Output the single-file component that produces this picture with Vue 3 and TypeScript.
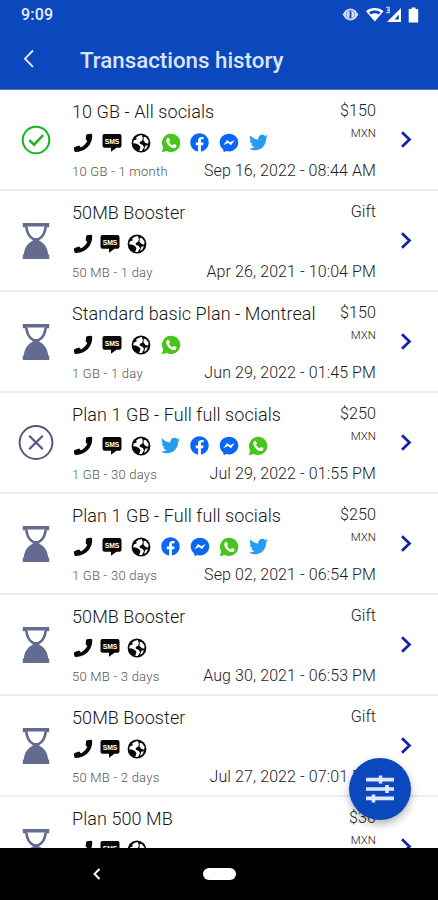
<script setup lang="ts">
type IconName = 'phone' | 'sms' | 'globe' | 'whatsapp' | 'facebook' | 'messenger' | 'twitter'
type Status = 'done' | 'pending' | 'cancelled'

interface Transaction {
  status: Status
  title: string
  price: string
  currency?: string
  icons: IconName[]
  detail?: string
  date?: string
}

const base: IconName[] = ['phone', 'sms', 'globe']

const transactions: Transaction[] = [
  { status: 'done', title: '10 GB - All socials', price: '$150', currency: 'MXN', icons: [...base, 'whatsapp', 'facebook', 'messenger', 'twitter'], detail: '10 GB - 1 month', date: 'Sep 16, 2022 - 08:44 AM' },
  { status: 'pending', title: '50MB Booster', price: 'Gift', icons: base, detail: '50 MB - 1 day', date: 'Apr 26, 2021 - 10:04 PM' },
  { status: 'pending', title: 'Standard basic Plan - Montreal', price: '$150', currency: 'MXN', icons: [...base, 'whatsapp'], detail: '1 GB - 1 day', date: 'Jun 29, 2022 - 01:45 PM' },
  { status: 'cancelled', title: 'Plan 1 GB - Full full socials', price: '$250', currency: 'MXN', icons: [...base, 'twitter', 'facebook', 'messenger', 'whatsapp'], detail: '1 GB - 30 days', date: 'Jul 29, 2022 - 01:55 PM' },
  { status: 'pending', title: 'Plan 1 GB - Full full socials', price: '$250', currency: 'MXN', icons: [...base, 'facebook', 'messenger', 'whatsapp', 'twitter'], detail: '1 GB - 30 days', date: 'Sep 02, 2021 - 06:54 PM' },
  { status: 'pending', title: '50MB Booster', price: 'Gift', icons: base, detail: '50 MB - 3 days', date: 'Aug 30, 2021 - 06:53 PM' },
  { status: 'pending', title: '50MB Booster', price: 'Gift', icons: base, detail: '50 MB - 2 days', date: 'Jul 27, 2022 - 07:01 PM' },
  { status: 'pending', title: 'Plan 500 MB', price: '$30', currency: 'MXN', icons: base },
]
</script>

<template>
  <div class="screen">
    <header class="header">
      <div class="statusbar">
        <span class="clock">9:09</span>
        <svg class="system" viewBox="0 0 80 20" width="80" height="20">
          <path d="M.5 9.500L3.500 5.500Q8.500 1.500 13.500 5.500l3 4-3 4Q8.500 17.500 3.500 13.500z" fill="#d3dcf8" />
          <circle cx="8.500" cy="9.500" r="4.200" fill="none" stroke="#6f90dc" stroke-width=".8" />
          <path d="M8.500 6v7" stroke="#0c48bd" stroke-width="1.800" />
          <path d="M24 6.200C28.500 2 37 2 41.500 6.200L32.800 16.500z" fill="#fff" />
          <path d="M27 7.200c3.200-2.400 8.400-2.400 11.600 0l-1.800 2.200c-2.300-1.700-5.700-1.700-8 0z" fill="#0c48bd" />
          <path d="M45 17L59 3v14z" fill="#fff" />
          <path d="M52.500 14.500L56.800 9.500v5z" fill="#0c48bd" />
          <path d="M44.200 2.500h3v5h-3M45 5h2" fill="none" stroke="#b9c9f0" stroke-width="1.400" />
          <path d="M69.500 2.500h4V4h2.700v13.500h-9.500V4h2.800z" fill="#fff" />
        </svg>
      </div>
      <div class="toolbar">
        <svg class="back" viewBox="0 0 12 20" width="12" height="20">
          <path d="M10 1.500L2 9.700l8 8.200" fill="none" stroke="#e4eafb" stroke-width="1.900" />
        </svg>
        <h1>Transactions history</h1>
      </div>
    </header>

    <main class="list">
      <article v-for="(t, i) in transactions" :key="i" class="row">
        <div class="status">
          <svg v-if="t.status === 'done'" viewBox="0 0 30 30" width="30" height="30" fill="none" stroke="#14b71c">
            <circle cx="15" cy="15" r="13.300" stroke-width="2" />
            <path d="M8.300 15.200l4.800 4.500 9-9.500" stroke-width="2.400" />
          </svg>
          <svg v-else-if="t.status === 'cancelled'" viewBox="0 0 36 36" width="36" height="36" fill="none" stroke="#545a82">
            <circle cx="18" cy="17.500" r="16.400" stroke-width="2" />
            <path d="M11.200 10.700l13.600 13.600M24.800 10.700L11.200 24.300" stroke-width="2.200" />
          </svg>
          <svg v-else viewBox="0 0 28 36" width="28" height="36">
            <path d="M.8 0h26.400v4.200H.8zM.8 31.500h26.400V36H.8z" fill="#646b90" />
            <path d="M4.300 3.500C4.800 10 7.500 14.200 11.800 16.400h4.400C20.500 14.200 23.200 10 23.700 3.500" fill="#fff" stroke="#646b90" stroke-width="2.700" />
            <path d="M10.800 15.700h6.400v2C22.500 20 26 25 26.200 32.500H1.800C2 25 5.500 20 10.800 17.700z" fill="#646b90" />
          </svg>
        </div>

        <div class="body">
          <div class="top">
            <h2>{{ t.title }}</h2>
            <span class="price">{{ t.price }}</span>
          </div>
          <div class="middle">
            <div class="icons" :class="{ tight: t.icons.length === 3 }">
              <span v-for="icon in t.icons" :key="icon" class="icon">
                <svg v-if="icon === 'phone'" viewBox="0 0 20 20" width="20" height="20">
                  <path fill="#080808" d="M14.200 1.200l3.300-.4q1.500-.1 1.700 1.300C19.800 11.500 12 19.300 2.800 19q-1.200 0-1.500-1.300L.9 15.600q-.2-1 .8-1.500l3.600-1.400q.9-.3 1.500.4l1.100 1.300C10.500 13 12.900 10.800 14.300 8l-1.100-1q-.6-.6-.5-1.500l.4-3.200q.1-.9 1.100-1.100z" />
                </svg>
                <svg v-else-if="icon === 'sms'" viewBox="0 0 20 20" width="20" height="20">
                  <path fill="#080808" d="M2.500 1h15q2 0 2 2v9.800q0 2-2 2h-3l-5.500 4v-4H2.500q-2 0-2-2V3q0-2 2-2z" />
                  <text x="10" y="10.500" text-anchor="middle" class="smstext">SMS</text>
                </svg>
                <svg v-else-if="icon === 'globe'" viewBox="0 0 20 20" width="20" height="20">
                  <circle cx="10" cy="10" r="9.400" fill="#080808" />
                  <path fill="#fff" d="M10.800 2l-3 .8-2.700 1.700.7 1.700-2.900 1.200-.9 2.800 2.900.2 3 1.700 1.600 2-1.300 3.800 2.600.2 2.200-3.900-1.200-2.300-2.900-1.100-.2-1.700 2.400-1.400.8-2.500zM12.800 3.700l2.200.6 2.600 3.500-.5 2.900-2.800-.9-1.800-2.400zM14.400 12.800l2.600-.6-1.800 3.600-2.200 1z" />
                </svg>
                <svg v-else-if="icon === 'whatsapp'" viewBox="0 0 20 20" width="20" height="20">
                  <path fill="#48c51d" d="M10.200.8a9.100 9.100 0 1 1-4.400 17.100L.8 19.300l1.400-4.900A9.100 9.100 0 0 1 10.200.8z" />
                  <path fill="#fff" d="M6.200 5.200c.8-.8 1.500-.6 1.900.2l.8 1.800c.2.500-.8 1.300-.8 1.700.8 1.600 2 2.600 3.500 3.300.5.100 1.100-1.200 1.600-1.100l2 1c.5.300.3 1.700-.4 2.300-1.700 1.600-4.700.3-6.800-1.700C5.900 10.600 4.200 7.400 6.200 5.200z" />
                </svg>
                <svg v-else-if="icon === 'facebook'" viewBox="0 0 512 512" width="19" height="19">
                  <path fill="#0868f5" d="M504 256C504 119 393 8 256 8S8 119 8 256c0 123.780 90.690 226.380 209.250 245V327.690h-63V256h63v-54.640c0-62.150 37-96.480 93.670-96.480 27.140 0 55.520 4.840 55.520 4.840v61h-31.280c-30.800 0-40.410 19.120-40.410 38.730V256h68.780l-11 71.690h-57.780V501C413.310 482.380 504 379.780 504 256z" />
                </svg>
                <svg v-else-if="icon === 'messenger'" viewBox="0 0 20 20" width="20" height="20">
                  <path fill="#0868f5" d="M10 .8c5.200 0 9.300 3.800 9.300 8.800s-4.100 8.800-9.300 8.800c-1 0-1.800-.1-2.700-.4l-2.600 1.300-.5-2.700C2 14.900.7 12.600.7 9.600.7 4.600 4.800.8 10 .8z" />
                  <path fill="#fff" d="M4.300 12.300L8 7l3 2.200 4.700-2.300-3.700 5.300-3-2.200z" />
                </svg>
                <svg v-else viewBox="0 0 512 512" width="19" height="19">
                  <path fill="#249df0" d="M459.370 151.716c.325 4.548.325 9.097.325 13.645 0 138.720-105.583 298.558-298.558 298.558-59.452 0-114.680-17.219-161.137-47.106 8.447.974 16.568 1.299 25.340 1.299 49.055 0 94.213-16.568 130.274-44.832-46.132-.975-84.792-31.188-98.112-72.772 6.498.974 12.995 1.624 19.818 1.624 9.421 0 18.843-1.300 27.614-3.573-48.081-9.747-84.143-51.980-84.143-102.985v-1.299c13.969 7.797 30.214 12.670 47.431 13.319-28.264-18.843-46.781-51.005-46.781-87.391 0-19.492 5.197-37.360 14.294-52.954 51.655 63.675 129.300 105.258 216.365 109.807-1.624-7.797-2.599-15.918-2.599-24.040 0-57.828 46.782-104.934 104.934-104.934 30.213 0 57.502 12.670 76.670 33.137 23.715-4.548 46.456-13.320 66.599-25.340-7.798 24.366-24.366 44.833-46.132 57.827 21.117-2.273 41.584-8.122 60.426-16.243-14.292 20.791-32.161 39.308-52.628 54.253z" />
                </svg>
              </span>
            </div>
            <span v-if="t.currency" class="currency">{{ t.currency }}</span>
          </div>
          <div class="bottom">
            <span v-if="t.detail" class="detail">{{ t.detail }}</span>
            <time v-if="t.date">{{ t.date }}</time>
          </div>
        </div>

        <svg class="chevron" viewBox="0 0 12 18" width="12" height="18">
          <path d="M2 1.300l7.500 7.200L2 15.700" fill="none" stroke="#1420aa" stroke-width="2.700" />
        </svg>
      </article>
    </main>

    <button class="filter" aria-label="Filter">
      <svg viewBox="0 0 30 28" width="30" height="28" stroke="#e0e7ff" fill="none">
        <path d="M1 4.600h28M1 14h28M1 23.400h28" stroke-width="3.700" />
        <path d="M15.500 .6v8M22 10v8M8.500 19.400v8" stroke-width="3.600" />
      </svg>
    </button>

    <nav class="navbar">
      <svg viewBox="0 0 10 14" width="10" height="14">
        <path d="M8.500 2L3.500 7l5 5" fill="none" stroke="#fff" stroke-width="2" />
      </svg>
      <span class="home"></span>
    </nav>
  </div>
</template>

<style>
body {
  margin: 0;
}
</style>

<style scoped>
.screen {
  position: relative;
  display: flex;
  flex-direction: column;
  width: 438px;
  height: 900px;
  overflow: hidden;
  background: #fff;
  font-family: Roboto, "Liberation Sans", sans-serif;
  font-weight: 300;
}
.header {
  flex: none;
  box-sizing: border-box;
  height: 90px;
  background: #0c48bd;
  border-bottom: 1px solid #5f77c4;
  color: #e8edfc;
}
.statusbar {
  display: flex;
  justify-content: space-between;
  align-items: center;
  height: 29px;
  padding: 0 18px 0 21px;
}
.clock {
  font-size: 16px;
  font-weight: 500;
  letter-spacing: 0.2px;
}
.system {
  margin-right: -2px;
}
.toolbar {
  display: flex;
  align-items: center;
  gap: 45px;
  height: 60px;
  padding-left: 23px;
  box-sizing: border-box;
}
h1 {
  margin: 1px 0 0;
  font-size: 22.3px;
  font-weight: 500;
  line-height: 30px;
  color: #dbe4fb;
}
.list {
  flex: 1;
  min-height: 0;
  overflow: hidden;
}
.row {
  display: flex;
  align-items: center;
  box-sizing: border-box;
  height: 101px;
  border-bottom: 2px solid #ededed;
}
.status {
  display: flex;
  justify-content: center;
  width: 72px;
}
.body {
  display: flex;
  flex-direction: column;
  width: 304px;
  height: 90px;
}
.top {
  display: flex;
  justify-content: space-between;
  height: 33px;
}
h2 {
  margin: 0;
  font-size: 18px;
  font-weight: 300;
  line-height: 34px;
  letter-spacing: 0.08px;
  color: #161616;
  white-space: nowrap;
}
.price {
  font-size: 16.200px;
  line-height: 32px;
  color: #222;
}
.middle {
  display: flex;
  justify-content: space-between;
  height: 30px;
}
.icons {
  display: flex;
  align-items: center;
  gap: 9.200px;
  margin-left: 1px;
}
.icons.tight {
  gap: 7px;
}
.icon {
  display: flex;
  align-items: center;
  justify-content: center;
  width: 20px;
  height: 20px;
}
.smstext {
  font-family: "Liberation Sans", sans-serif;
  font-size: 6.800px;
  font-weight: 700;
  fill: #fff;
}
.currency {
  font-size: 11.500px;
  line-height: 10px;
  color: #222;
}
.bottom {
  display: flex;
  justify-content: space-between;
  line-height: 26px;
}
.detail {
  padding-top: 1px;
  font-size: 13px;
  letter-spacing: 0.24px;
  color: #555;
}
time {
  font-size: 16px;
  letter-spacing: 0.1px;
  color: #1c1c1c;
}
.chevron {
  margin-left: 24px;
}
.filter {
  position: absolute;
  right: 27px;
  bottom: 80px;
  display: flex;
  align-items: center;
  justify-content: center;
  width: 62px;
  height: 62px;
  padding: 0;
  border: 0;
  border-radius: 50%;
  background: #0c48bd;
  box-shadow: 0 4px 9px rgba(0, 0, 0, 0.3);
}
.navbar {
  flex: none;
  display: grid;
  grid-template-columns: 1fr 33px 1fr;
  align-items: center;
  box-sizing: border-box;
  height: 52px;
  background: #000;
}
.navbar svg {
  margin-left: 91px;
}
.home {
  height: 12px;
  border-radius: 6px;
  background: #fff;
}
</style>
